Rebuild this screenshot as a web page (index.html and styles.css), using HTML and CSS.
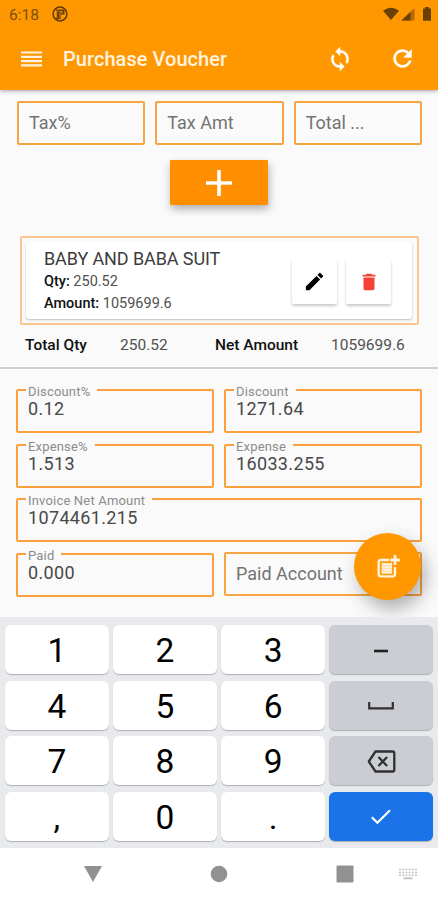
FILE: index.html
```html
<!DOCTYPE html>
<html lang="en">

<head>
    <meta charset="UTF-8" />
    <meta name="viewport" content="width=device-width, initial-scale=1.0" />
    <title>Purchase Voucher</title>

    <link rel="stylesheet" href="styles.css">
</head>

<body>
    <header class="top">
        <div class="status-bar">
            <span class="time">6:18</span>
            <svg class="status-app" width="16" height="16" viewBox="0 0 16 16">
                <circle cx="8" cy="8" r="6.900" fill="none" stroke="#633c05" stroke-width="1.500" />
                <path d="M6.500 3.500H12.500V8.500H9V13H4V3.500z" fill="#633c05" />
                <path d="M4.700 12V5h2" fill="none" stroke="#ee8e02" stroke-width="1" />
                <path d="M8 12.500V5.500h2.200v2" fill="none" stroke="#ee8e02" stroke-width="1" />
            </svg>
            <svg class="status-icons" width="50" height="16" viewBox="0 0 50 16">
                <path d="M0 4.800Q8 -1.200 16 4.800L8 14z" fill="#6b4103" />
                <path d="M31.500 2V14.500H18.500z" fill="#b36c05" />
                <path d="M27.500 5.800V14.500H18.500z" fill="#6b4103" />
                <path d="M40 2.500H42V1h4V2.500h2V14.800h-8z" fill="#6b4103" />
            </svg>
        </div>
        <div class="app-bar">
            <svg class="menu" width="22" height="16" viewBox="0 0 22 16">
                <path d="M0 1.500h21M0 5.800h21M0 10.100h21M0 14.400h21" stroke="#fff3e0" stroke-width="2.200" />
            </svg>
            <h1>Purchase Voucher</h1>
            <svg class="sync" width="26" height="26" viewBox="0 0 24 24" fill="#fff" stroke="#fff" stroke-width=".4">
                <path d="M12 4V1L8 5l4 4V6c3.310 0 6 2.690 6 6 0 1.010-.25 1.970-.7 2.800l1.460 1.460C19.540 15.030 20 13.570 20 12c0-4.420-3.580-8-8-8zm0 14c-3.310 0-6-2.690-6-6 0-1.010.25-1.970.7-2.800L5.240 7.740C4.460 8.970 4 10.430 4 12c0 4.420 3.580 8 8 8v3l4-4-4-4v3z" />
            </svg>
            <svg class="refresh" width="27" height="27" viewBox="0 0 24 24" fill="#fff" stroke="#fff" stroke-width=".4">
                <path d="M17.650 6.350C16.200 4.900 14.210 4 12 4c-4.420 0-7.990 3.580-7.990 8s3.570 8 7.990 8c3.730 0 6.840-2.550 7.730-6h-2.080c-.82 2.330-3.040 4-5.650 4-3.310 0-6-2.690-6-6s2.690-6 6-6c1.660 0 3.140.69 4.220 1.780L13 11h7V4l-2.350 2.350z" />
            </svg>
        </div>
    </header>

    <main class="content">
        <div class="tax-row">
            <div class="box">Tax%</div>
            <div class="box">Tax Amt</div>
            <div class="box">Total ...</div>
        </div>

        <button class="add-btn" aria-label="Add">
            <svg width="28" height="28" viewBox="0 0 28 28">
                <path d="M14 1v26M1 14h26" stroke="#fff" stroke-width="3.600" />
            </svg>
        </button>

        <div class="item-frame">
            <div class="item">
                <div class="item-text">
                    <div class="item-name">BABY AND BABA SUIT</div>
                    <div class="item-line"><b>Qty:</b> 250.52</div>
                    <div class="item-line"><b>Amount:</b> 1059699.6</div>
                </div>
                <button class="item-btn" aria-label="Edit">
                    <svg width="23" height="23" viewBox="0 0 24 24" fill="#000">
                        <path d="M3 17.250V21h3.750L17.810 9.940l-3.750-3.750L3 17.250zM20.710 7.040c.39-.39.39-1.020 0-1.410l-2.340-2.340c-.39-.39-1.020-.39-1.410 0l-1.830 1.830 3.750 3.750 1.830-1.830z" />
                    </svg>
                </button>
                <button class="item-btn" aria-label="Delete">
                    <svg width="22" height="22" viewBox="0 0 24 24" fill="#f44336">
                        <path d="M6 19c0 1.100.9 2 2 2h8c1.100 0 2-.9 2-2V7H6v12zM19 4h-3.500l-1-1h-5l-1 1H5v2h14V4z" />
                    </svg>
                </button>
            </div>
        </div>

        <div class="totals">
            <b class="qty-label">Total Qty</b>
            <span class="qty">250.52</span>
            <b class="net-label">Net Amount</b>
            <span>1059699.6</span>
        </div>

        <form class="fields">
            <fieldset class="field">
                <legend>Discount%</legend>
                <div class="value">0.12</div>
            </fieldset>
            <fieldset class="field">
                <legend>Discount</legend>
                <div class="value">1271.64</div>
            </fieldset>
            <fieldset class="field">
                <legend>Expense%</legend>
                <div class="value">1.513</div>
            </fieldset>
            <fieldset class="field">
                <legend>Expense</legend>
                <div class="value">16033.255</div>
            </fieldset>
            <fieldset class="field wide">
                <legend>Invoice Net Amount</legend>
                <div class="value">1074461.215</div>
            </fieldset>
            <fieldset class="field">
                <legend>Paid</legend>
                <div class="value">0.000</div>
            </fieldset>
            <div class="box account">Paid Account</div>
        </form>

        <button class="fab" aria-label="Save">
            <svg width="28" height="28" viewBox="0 0 24 24">
                <path d="M13 6H6Q4 6 4 8V18Q4 20 6 20H16Q18 20 18 18V12" fill="none" stroke="#fff3e0" stroke-width="2" />
                <path d="M19 2h-2v3h-3v2h3v3h2V7h3V5h-3z" fill="#fff3e0" stroke="#fff3e0" stroke-width=".4" />
                <path d="M6.500 8.500h9v9h-9z" fill="#ffe3b8" />
                <path d="M6.500 9.500h9M6.500 12h9M6.500 14.500h9M6.500 17h9" stroke="#fff3e0" stroke-width="1.200" />
            </svg>
        </button>
    </main>

    <div class="keyboard">
        <div class="key">1</div>
        <div class="key">2</div>
        <div class="key">3</div>
        <div class="key grey">
            <svg width="16" height="4" viewBox="0 0 16 4">
                <path d="M1 2h14" stroke="#202124" stroke-width="2.600" />
            </svg>
        </div>
        <div class="key">4</div>
        <div class="key">5</div>
        <div class="key">6</div>
        <div class="key grey">
            <svg width="26" height="8" viewBox="0 0 26 8">
                <path d="M1.200 0v6.400h23.600V0" fill="none" stroke="#303134" stroke-width="2.200" />
            </svg>
        </div>
        <div class="key">7</div>
        <div class="key">8</div>
        <div class="key">9</div>
        <div class="key grey">
            <svg width="29" height="23" viewBox="0 0 29 23">
                <path d="M8.500 1.500H25.500Q27.300 1.500 27.300 3.300V19.700Q27.300 21.500 25.500 21.500H8.500L1.800 11.500z" fill="none" stroke="#303134" stroke-width="2.300" stroke-linejoin="round" />
                <path d="M11.500 7l8.600 9M20.100 7l-8.600 9" stroke="#303134" stroke-width="2.300" />
            </svg>
        </div>
        <div class="key">,</div>
        <div class="key">0</div>
        <div class="key">.</div>
        <div class="key blue">
            <svg width="20" height="16" viewBox="0 0 20 16">
                <path d="M.8 8.200l5.600 5.600L19 1.200" fill="none" stroke="#fff" stroke-width="2.200" />
            </svg>
        </div>
    </div>

    <nav class="nav-bar">
        <svg class="back" width="18" height="16" viewBox="0 0 18 16">
            <path d="M0 0h18L9 16z" fill="#919191" />
        </svg>
        <svg class="home" width="18" height="18" viewBox="0 0 18 18">
            <circle cx="9" cy="9" r="8.300" fill="#919191" />
        </svg>
        <svg class="recent" width="18" height="18" viewBox="0 0 18 18">
            <rect x=".5" y=".5" width="17" height="17" rx="1" fill="#919191" />
        </svg>
        <svg class="ime" width="18" height="12" viewBox="0 0 18 12">
            <path d="M0 1.500h18M0 4.500h18M0 7.300h18" stroke="#c4c4c4" stroke-width="1.600" stroke-dasharray="2 1.200" />
            <path d="M4.500 10.300h9" stroke="#c4c4c4" stroke-width="2" />
        </svg>
    </nav>
</body>

</html>
```
FILE: styles.css
```css
* {
    box-sizing: border-box;
}

html,
body {
    height: 100%;
    margin: 0;
    padding: 0;
}

body {
    display: flex;
    flex-direction: column;
    height: 900px;
    overflow: hidden;
    background: #fafafa;
    font-family: Roboto, sans-serif;
    color: #212121;
}

svg {
    display: block;
    flex: none;
}

button {
    border: 0;
    padding: 0;
    display: flex;
    align-items: center;
    justify-content: center;
}

.top {
    height: 90px;
    flex: none;
    background: #ff9800;
    box-shadow: 0 1px 4px rgba(0, 0, 0, 0.35);
}

.status-bar {
    display: flex;
    align-items: center;
    height: 28px;
    padding: 0 9px;
    color: #7a4c0a;
    font-size: 15.5px;
}

.time {
    width: 43px;
    padding-top: 1px;
}

.status-icons {
    margin-left: auto;
    margin-right: -4px;
}

.app-bar {
    display: flex;
    align-items: center;
    height: 61px;
    padding: 0 22px 0 21px;
}

.app-bar h1 {
    flex: 1;
    margin: 0 0 0 20px;
    color: #fff3e0;
    font-size: 20px;
    font-weight: 500;
    letter-spacing: 0.05px;
}

.refresh {
    margin-left: 36px;
}

.content {
    position: relative;
    display: flex;
    flex-direction: column;
    flex: none;
    height: 527px;
    overflow: hidden;
}

.tax-row {
    display: flex;
    gap: 10px;
    padding: 11px 16px 0 17px;
}

.box {
    flex: 1;
    display: flex;
    align-items: center;
    height: 44px;
    padding: 0 0 2px 10px;
    border: 2px solid #f7a540;
    border-radius: 2px;
    color: #737373;
    font-size: 18px;
}

.account {
    padding-bottom: 0;
}

.add-btn {
    align-self: center;
    width: 98px;
    height: 45px;
    margin-top: 15px;
    background: #ff8f00;
    border-radius: 1px;
    box-shadow: 1px 4px 9px rgba(0, 0, 0, 0.3);
}

.item-frame {
    height: 89px;
    margin: 31px 19px 0 20px;
    padding: 4px 5px 4px 4px;
    border: 2px solid #fcc48e;
    border-radius: 2px;
}

.item {
    display: flex;
    height: 77px;
    padding: 0 21px 0 18px;
    background: #fff;
    border-radius: 3px;
    box-shadow: 0 1px 2px rgba(0, 0, 0, 0.25);
}

.item-text {
    flex: 1;
    padding-top: 5px;
}

.item-name {
    color: #3c3c3c;
    font-size: 18px;
    line-height: 24px;
    letter-spacing: -0.1px;
}

.item-line {
    color: #505050;
    font-size: 14.5px;
    line-height: 22px;
}

.item-line b,
.totals b {
    color: #111;
    font-weight: 500;
}

.item-btn {
    width: 45px;
    height: 45px;
    margin: 17px 0 0 9px;
    background: #fff;
    border-radius: 2px;
    box-shadow: 0 2px 3px rgba(0, 0, 0, 0.22);
}

.totals {
    display: flex;
    align-items: center;
    height: 44px;
    padding: 0 25px 2px;
    border-bottom: 2px solid #d0d0d0;
    color: #505050;
    font-size: 15.5px;
}

.qty-label {
    width: 95px;
}

.qty {
    width: 95px;
}

.net-label {
    width: 116px;
}

.fields {
    display: grid;
    grid-template-columns: 198px 198px;
    grid-auto-rows: 44px;
    gap: 10.5px 10px;
    padding: 19px 0 0 16px;
}

.field {
    height: 51px;
    min-width: 0;
    margin: -6px 0 0;
    padding: 0 8px;
    border: 2px solid #fba03c;
    border-radius: 2px;
}

.field legend {
    height: 16px;
    padding: 0 7px 0 2px;
    color: #8c8c8c;
    font-size: 13px;
    line-height: 20px;
    letter-spacing: 0.18px;
}

.value {
    padding-left: 2px;
    color: #484848;
    font-size: 18px;
    line-height: 22px;
    letter-spacing: 0.35px;
}

.wide {
    grid-column: 1 / 3;
}

.fab {
    position: absolute;
    left: 354px;
    top: 443px;
    width: 67px;
    height: 67px;
    border-radius: 50%;
    background: #ff9800;
    box-shadow: 5px 9px 18px rgba(0, 0, 0, 0.3);
}

.keyboard {
    display: grid;
    grid-template-columns: repeat(4, 1fr);
    grid-auto-rows: 49px;
    gap: 6.5px 4.5px;
    height: 231px;
    flex: none;
    padding: 8px 5px 0;
    background: #e8eaed;
}

.key {
    display: flex;
    align-items: center;
    justify-content: center;
    padding-top: 2px;
    background: #fff;
    border-radius: 6px;
    box-shadow: 0 1px 1px rgba(0, 0, 0, 0.25);
    color: #000;
    font-size: 33.5px;
}

.grey {
    background: #cccdd2;
}

.blue {
    background: #1a73e8;
}

.nav-bar {
    display: flex;
    align-items: center;
    flex: 1;
    padding: 0 21px 0 84px;
    background: #fff;
}

.home {
    margin-left: 108px;
}

.recent {
    margin-left: 108px;
}

.ime {
    margin-left: auto;
}
```
